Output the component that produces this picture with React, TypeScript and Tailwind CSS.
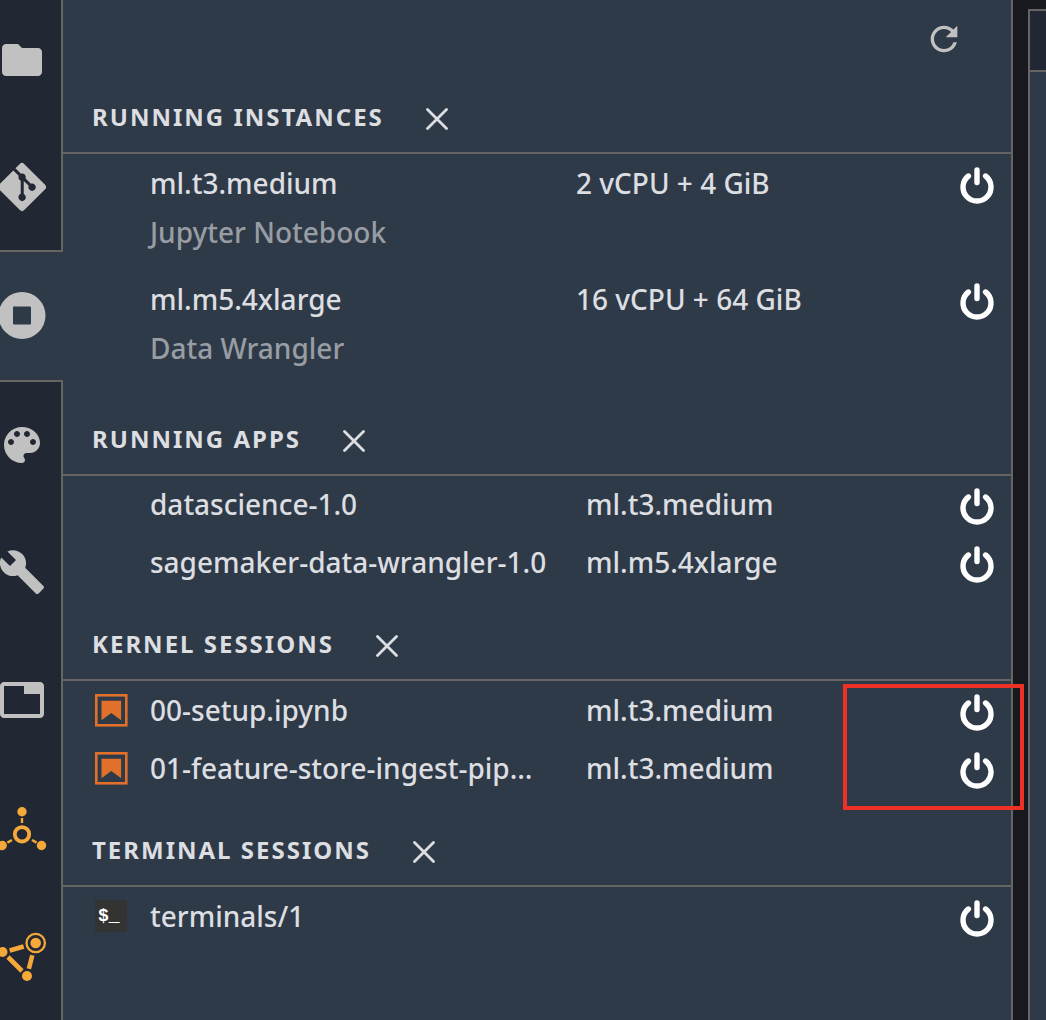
import type { ReactNode } from 'react';
import { FaGitAlt } from 'react-icons/fa';

function MaterialIcon({ d }: { d: string }) {
  return (
    <svg viewBox="0 0 24 24" className="size-12 shrink-0" fill="currentColor" aria-hidden="true">
      <path d={d} />
    </svg>
  );
}

const FOLDER =
  'M10 4H4c-1.1 0-1.99.9-1.99 2L2 18c0 1.1.9 2 2 2h16c1.1 0 2-.9 2-2V8c0-1.1-.9-2-2-2h-8l-2-2z';
const PALETTE =
  'M12 3c-4.97 0-9 4.03-9 9s4.03 9 9 9c.83 0 1.5-.67 1.5-1.5 0-.39-.15-.74-.39-1.01-.23-.26-.38-.61-.38-.99 0-.83.67-1.5 1.5-1.5H16c2.76 0 5-2.24 5-5 0-4.42-4.03-8-9-8zm-5.5 9c-.83 0-1.5-.67-1.5-1.5S5.67 9 6.5 9 8 9.67 8 10.5 7.33 12 6.5 12zm3-4C8.67 8 8 7.33 8 6.5S8.67 5 9.5 5s1.5.67 1.5 1.5S10.33 8 9.5 8zm5 0c-.83 0-1.5-.67-1.5-1.5S13.67 5 14.5 5s1.5.67 1.5 1.5S15.33 8 14.5 8zm3 4c-.83 0-1.5-.67-1.5-1.5S16.67 9 17.5 9s1.5.67 1.5 1.5-.67 1.5-1.5 1.5z';
const WRENCH =
  'M22.7 19l-9.1-9.1c.9-2.3.4-5-1.5-6.9-2-2-5-2.4-7.4-1.3L9 6 6 9 1.6 4.7C.4 7.1.9 10.1 2.9 12.1c1.9 1.9 4.6 2.4 6.9 1.5l9.1 9.1c.4.4 1 .4 1.4 0l2.3-2.3c.5-.4.5-1.1.1-1.4z';
const TAB =
  'M21 3H3c-1.1 0-2 .9-2 2v14c0 1.1.9 2 2 2h18c1.1 0 2-.9 2-2V5c0-1.1-.9-2-2-2zm0 16H3V5h10v4h8v10z';

function StopIcon() {
  return (
    <svg viewBox="0 0 48 48" className="size-12 shrink-0" aria-hidden="true">
      <circle cx="24" cy="23.5" r="23.5" fill="currentColor" />
      <rect x="15" y="14.5" width="18" height="18" rx="1" fill="#2f3a48" />
    </svg>
  );
}

function ComponentsIcon() {
  return (
    <svg viewBox="0 0 48 48" className="size-12 shrink-0 overflow-visible" fill="#f4a93a" stroke="#f4a93a" aria-hidden="true">
      <circle cx="24" cy="30.3" r="7.2" fill="none" strokeWidth="3.8" />
      <g stroke="none">
        <circle cx="24" cy="7.7" r="4.7" />
        <circle cx="4.2" cy="41.5" r="4.7" />
        <circle cx="43.5" cy="41.5" r="4.7" />
      </g>
      <path d="M24 14v5M14 36l-4.6 2.6M34 36l4.6 2.6" strokeWidth="2.4" fill="none" />
    </svg>
  );
}

function GraphIcon() {
  return (
    <svg viewBox="0 0 48 48" className="size-12 shrink-0 overflow-visible" fill="#f4a93a" stroke="#f4a93a" aria-hidden="true">
      <circle cx="37.7" cy="11" r="9.2" fill="none" strokeWidth="2.3" />
      <g stroke="none">
        <circle cx="37.7" cy="11" r="5.3" />
        <circle cx="4.5" cy="20" r="5" />
        <circle cx="29" cy="44" r="5" />
      </g>
      <path d="M11.7 18.5l14-4M10 25l14 14M34.3 23.2l-3.4 13.5" strokeWidth="4.6" fill="none" />
    </svg>
  );
}

function PowerButton({ label }: { label: string }) {
  return (
    <button type="button" aria-label={`Shut down ${label}`} className="ml-auto shrink-0 cursor-pointer text-white">
      <svg viewBox="0 0 36 38" className="h-[38px] w-9" fill="none" stroke="currentColor" strokeWidth="5.4" strokeLinecap="round" aria-hidden="true">
        <path d="M9.4 10a14 14 0 1 0 17.2 0M18 4v12.5" />
      </svg>
    </button>
  );
}

function NotebookIcon() {
  return (
    <svg viewBox="0 0 33 33" className="size-[33px]" aria-hidden="true">
      <rect x="1.3" y="1.3" width="30" height="30" fill="none" stroke="#e0702a" strokeWidth="2.6" />
      <path d="M6.5 6.7h19.6v19.6L16.3 19 6.5 26.3z" fill="#e0702a" />
    </svg>
  );
}

function TerminalIcon() {
  return (
    <span aria-hidden="true" className="flex size-8 items-center bg-[#333333] pl-[3px] font-['Liberation_Mono',monospace] text-lg font-bold text-white">
      $_
    </span>
  );
}

function Section({ title, children }: { title: string; children: ReactNode }) {
  return (
    <section>
      <header className="flex h-[88px] items-center gap-[42px] border-b-2 border-[#666564] pt-4 pl-[29px]">
        <h2 className="text-2xl font-bold tracking-[2px] whitespace-nowrap uppercase">{title}</h2>
        <button type="button" aria-label={`Shut down all ${title}`} className="mt-1 cursor-pointer">
          <svg viewBox="0 0 22 22" className="size-[22px]" stroke="currentColor" strokeWidth="2.8" strokeLinecap="round" aria-hidden="true">
            <path d="M1.5 1.5l19 19M20.5 1.5l-19 19" />
          </svg>
        </button>
      </header>
      {children}
    </section>
  );
}

function InstanceRow({ name, size, app }: { name: string; size: string; app: string }) {
  return (
    <li className="h-[116px]">
      <div className="grid h-[58px] grid-cols-[513fr_419fr] items-center pr-4">
        <span className="truncate pb-1 pl-[87px]">{name}</span>
        <span className="flex items-center">
          <span className="pb-1">{size}</span>
          <PowerButton label={name} />
        </span>
      </div>
      <p className="pl-[87px] leading-9 text-[#989da4]">{app}</p>
    </li>
  );
}

function SessionRow({ name, instance, icon }: { name: string; instance?: string; icon?: ReactNode }) {
  return (
    <li className="grid h-[58px] grid-cols-[523fr_409fr] items-center pr-4">
      <span className="flex min-w-0 items-center pb-1 pl-8">
        <span className="w-[55px] shrink-0">{icon}</span>
        <span className="truncate">{name}</span>
      </span>
      <span className="flex items-center">
        <span className="pb-1">{instance}</span>
        <PowerButton label={name} />
      </span>
    </li>
  );
}

const TABS: { label: string; icon: ReactNode; state: string }[] = [
  { label: 'File Browser', icon: <MaterialIcon d={FOLDER} />, state: 'border-r-2 bg-[#222833]' },
  { label: 'Git', icon: <FaGitAlt className="h-14 w-12 shrink-0" />, state: 'border-r-2 border-b-2 bg-[#222833]' },
  { label: 'Running Terminals and Kernels', icon: <StopIcon />, state: 'bg-[#2f3a48]' },
  { label: 'Commands', icon: <MaterialIcon d={PALETTE} />, state: 'border-t-2 border-r-2 bg-[#222833]' },
  { label: 'Property Inspector', icon: <MaterialIcon d={WRENCH} />, state: 'border-r-2 bg-[#222833]' },
  { label: 'Open Tabs', icon: <MaterialIcon d={TAB} />, state: 'border-r-2 bg-[#222833]' },
  { label: 'Components and registries', icon: <ComponentsIcon />, state: 'border-r-2 bg-[#222833]' },
  { label: 'Endpoints', icon: <GraphIcon />, state: 'border-r-2 bg-[#222833]' },
];

export default function App() {
  return (
    <div className="flex h-screen overflow-hidden bg-[#18191f] font-['Noto_Sans',sans-serif] text-[28px] font-medium text-[#dcdee1]">
      <nav aria-label="Sidebar" className="-mt-1 w-[63px] shrink-0 bg-[#222833]">
        {TABS.map((tab) => (
          <button
            key={tab.label}
            type="button"
            aria-label={tab.label}
            className={`flex h-32 w-full cursor-pointer items-center border-[#666564] text-[#c1c1c1] ${tab.state}`}
          >
            <span className="flex w-11 justify-center">{tab.icon}</span>
          </button>
        ))}
      </nav>

      <main className="min-w-0 flex-1 border-r-2 border-[#666564] bg-[#2f3a48]">
        <div className="flex h-[66px] items-center justify-end pt-3 pr-[47px]">
          <button type="button" aria-label="Refresh" className="cursor-pointer text-[#c1c1c1]">
            <svg viewBox="0 0 24 24" className="size-10" fill="currentColor" aria-hidden="true">
              <path d="M17.65 6.35A7.958 7.958 0 0 0 12 4c-4.42 0-7.99 3.58-7.99 8s3.57 8 7.99 8c3.73 0 6.84-2.55 7.73-6h-2.08A5.99 5.99 0 0 1 12 18c-3.31 0-6-2.69-6-6s2.69-6 6-6c1.66 0 3.14.69 4.22 1.78L13 11h7V4l-2.35 2.35z" />
            </svg>
          </button>
        </div>

        <Section title="Running Instances">
          <ul className="pt-0.5">
            <InstanceRow name="ml.t3.medium" size="2 vCPU + 4 GiB" app="Jupyter Notebook" />
            <InstanceRow name="ml.m5.4xlarge" size="16 vCPU + 64 GiB" app="Data Wrangler" />
          </ul>
        </Section>

        <Section title="Running Apps">
          <ul className="pt-px">
            <SessionRow name="datascience-1.0" instance="ml.t3.medium" />
            <SessionRow name="sagemaker-data-wrangler-1.0" instance="ml.m5.4xlarge" />
          </ul>
        </Section>

        <Section title="Kernel Sessions">
          <ul className="relative pt-0.5">
            <SessionRow name="00-setup.ipynb" instance="ml.t3.medium" icon={<NotebookIcon />} />
            <SessionRow name="01-feature-store-ingest-pip…" instance="ml.t3.medium" icon={<NotebookIcon />} />
            <li aria-hidden="true" className="pointer-events-none absolute top-[3px] -right-[13px] h-[126px] w-[181px] border-4 border-[#ee3124]" />
          </ul>
        </Section>

        <Section title="Terminal Sessions">
          <ul className="pt-0.5">
            <SessionRow name="terminals/1" icon={<TerminalIcon />} />
          </ul>
        </Section>
      </main>

      <aside className="mt-[9px] ml-[15px] w-[18px] shrink-0 border-t-2 border-l-2 border-[#666564] bg-[#2f3a48]">
        <div className="h-[61px] border-b-2 border-[#666564] bg-[#222833]" />
      </aside>
    </div>
  );
}
